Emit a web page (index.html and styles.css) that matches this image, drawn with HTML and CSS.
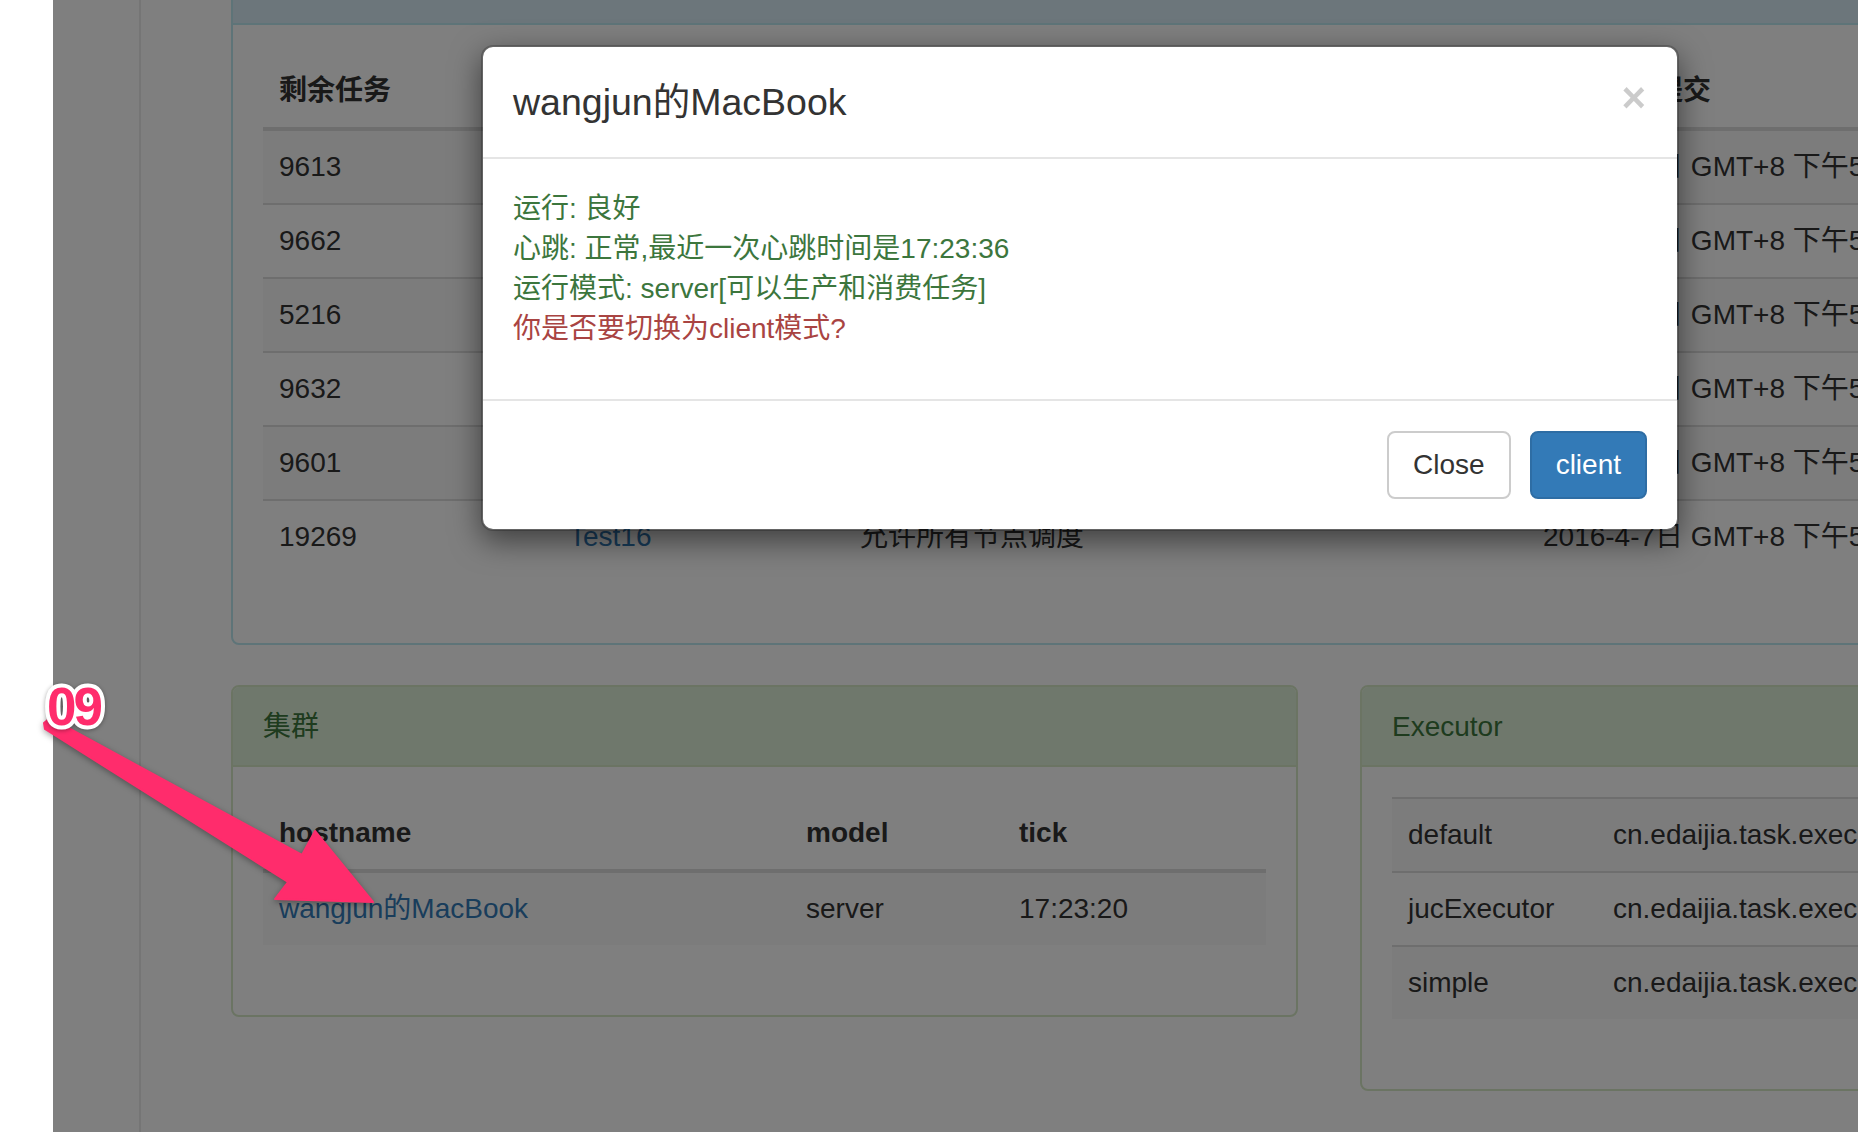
FILE: index.html
```html
<!DOCTYPE html>
<html lang="zh-CN">
<head>
<meta charset="utf-8">
<title>wangjun的MacBook</title>
<link rel="stylesheet" href="styles.css">
</head>
<body>
<div class="screen">
  <div class="margin-strip"></div>
  <div class="app">
    <aside class="sidebar"></aside>
    <main class="content">
      <section class="panel panel-info panel-tasks">
        <div class="panel-heading"></div>
        <div class="panel-body">
          <table class="table table-striped tasks-table">
            <colgroup>
              <col class="c-remain">
              <col class="c-name">
              <col class="c-policy">
              <col>
            </colgroup>
            <thead>
              <tr><th>剩余任务</th><th>任务名称</th><th>调度策略</th><th>最后一次提交</th></tr>
            </thead>
            <tbody>
              <tr><td>9613</td><td><a href="#">Test11</a></td><td>允许所有节点调度</td><td>2016-4-7日 GMT+8 下午5:23:20</td></tr>
              <tr><td>9662</td><td><a href="#">Test12</a></td><td>允许所有节点调度</td><td>2016-4-7日 GMT+8 下午5:23:20</td></tr>
              <tr><td>5216</td><td><a href="#">Test13</a></td><td>允许所有节点调度</td><td>2016-4-7日 GMT+8 下午5:23:20</td></tr>
              <tr><td>9632</td><td><a href="#">Test14</a></td><td>允许所有节点调度</td><td>2016-4-7日 GMT+8 下午5:23:20</td></tr>
              <tr><td>9601</td><td><a href="#">Test15</a></td><td>允许所有节点调度</td><td>2016-4-7日 GMT+8 下午5:23:20</td></tr>
              <tr><td>19269</td><td><a href="#">Test16</a></td><td>允许所有节点调度</td><td>2016-4-7日 GMT+8 下午5:23:20</td></tr>
            </tbody>
          </table>
        </div>
      </section>

      <div class="panel-row">
        <section class="panel panel-success panel-cluster">
          <div class="panel-heading">集群</div>
          <div class="panel-body">
            <table class="table table-striped cluster-table">
              <colgroup>
                <col class="c-host">
                <col class="c-model">
                <col>
              </colgroup>
              <thead>
                <tr><th>hostname</th><th>model</th><th>tick</th></tr>
              </thead>
              <tbody>
                <tr><td><a href="#">wangjun的MacBook</a></td><td>server</td><td>17:23:20</td></tr>
              </tbody>
            </table>
          </div>
        </section>
        <section class="panel panel-success panel-executor">
          <div class="panel-heading">Executor</div>
          <div class="panel-body">
            <table class="table table-striped executor-table">
              <colgroup>
                <col class="c-exec">
                <col>
              </colgroup>
              <tbody>
                <tr><td>default</td><td>cn.edaijia.task.executor.DefaultExecutor</td></tr>
                <tr><td>jucExecutor</td><td>cn.edaijia.task.executor.JucExecutor</td></tr>
                <tr><td>simple</td><td>cn.edaijia.task.executor.SimpleExecutor</td></tr>
              </tbody>
            </table>
          </div>
        </section>
      </div>
    </main>

    <div class="backdrop"></div>

    <div class="modal">
      <div class="modal-header">
        <h4 class="modal-title">wangjun的MacBook</h4>
        <button class="close" type="button">×</button>
      </div>
      <div class="modal-body">
        <p>
          <span class="text-success">运行: 良好</span><br>
          <span class="text-success">心跳: 正常,最近一次心跳时间是17:23:36</span><br>
          <span class="text-success">运行模式: server[可以生产和消费任务]</span><br>
          <span class="text-danger">你是否要切换为client模式?</span>
        </p>
      </div>
      <div class="modal-footer">
        <button class="btn btn-default" type="button">Close</button>
        <button class="btn btn-primary" type="button">client</button>
      </div>
    </div>
  </div>

  <svg class="annotation" width="1858" height="1132" viewBox="0 0 1858 1132">
    <polygon class="arrow" points="50,718 302,855 315,831 373,902 275,899 288,882 45,729 44,723"/>
    <text class="step" x="47" y="725">09</text>
  </svg>
</div>
</body>
</html>
```

FILE: styles.css
```css
* {
  box-sizing: border-box;
}

html, body {
  margin: 0;
  padding: 0;
  background: #fff;
}

body {
  font-family: "Liberation Sans", "Noto Sans CJK SC", sans-serif;
  font-size: 28px;
  line-height: 40px;
  color: #333;
  overflow: hidden;
}

.screen {
  position: relative;
  width: 1858px;
  height: 1132px;
  display: flex;
  overflow: hidden;
}

.margin-strip {
  flex: none;
  width: 53px;
  background: #fff;
}

.app {
  position: relative;
  flex: 1;
  display: flex;
  overflow: hidden;
  background: #fff;
}

.sidebar {
  flex: none;
  width: 88px;
  border-right: 2px solid #eaeaea;
}

.content {
  flex: none;
  width: 2500px;
  padding-left: 90px;
  margin-top: -57px;
}

/* panels */
.panel {
  background: #fff;
  border: 2px solid transparent;
  border-radius: 8px;
  margin-bottom: 40px;
}

.panel-heading {
  height: 80px;
  padding: 20px 30px;
  border-bottom: 2px solid transparent;
  border-radius: 6px 6px 0 0;
  white-space: nowrap;
}

.panel-body {
  padding: 30px;
}

.panel-info {
  border-color: #bce8f1;
}

.panel-info > .panel-heading {
  background: #d9edf7;
  border-bottom-color: #bce8f1;
  color: #31708f;
}

.panel-success {
  border-color: #d6e9c6;
}

.panel-success > .panel-heading {
  background: #dff0d8;
  border-bottom-color: #d6e9c6;
  color: #3c763d;
}

.panel-tasks {
  width: 2300px;
}

.panel-row {
  display: flex;
  align-items: flex-start;
  gap: 62px;
}

.panel-cluster {
  flex: none;
  width: 1067px;
}

.panel-executor {
  flex: none;
  width: 1067px;
}

/* tables */
.table {
  width: 100%;
  border-collapse: collapse;
  table-layout: fixed;
  margin-bottom: 40px;
}

.table th,
.table td {
  padding: 16px;
  line-height: 40px;
  text-align: left;
  vertical-align: top;
  border-top: 2px solid #ddd;
  white-space: nowrap;
  overflow: hidden;
}

.table thead th {
  border-top: 0;
  border-bottom: 4px solid #ddd;
  font-weight: bold;
  vertical-align: bottom;
}

.table-striped tbody tr:nth-child(odd) {
  background: #f9f9f9;
}

.table a {
  color: #337ab7;
  text-decoration: none;
}

.c-remain { width: 290px; }
.c-name { width: 291px; }
.c-policy { width: 683px; }

.c-host { width: 527px; }
.c-model { width: 213px; }

.c-exec { width: 205px; }

/* backdrop + modal */
.backdrop {
  position: absolute;
  inset: 0;
  background: rgba(0, 0, 0, 0.5);
}

.modal {
  position: absolute;
  left: 428px;
  top: 45px;
  width: 1198px;
  background: #fff;
  border: 2px solid rgba(0, 0, 0, 0.2);
  border-radius: 12px;
  box-shadow: 0 10px 30px rgba(0, 0, 0, 0.5);
  background-clip: padding-box;
}

.modal-header {
  display: flex;
  align-items: flex-start;
  justify-content: space-between;
  padding: 30px;
  border-bottom: 2px solid #e5e5e5;
}

.modal-title {
  margin: 0;
  font-size: 37.5px;
  line-height: 50px;
  font-weight: normal;
  color: #333;
}

.close {
  margin-top: 0;
  padding: 0;
  border: 0;
  background: transparent;
  font-family: "Liberation Sans", sans-serif;
  font-size: 42px;
  font-weight: bold;
  line-height: 42px;
  color: #000;
  opacity: 0.2;
  margin-right: 1px;
}

.modal-body {
  padding: 30px;
}

.modal-body p {
  margin: 0 0 20px;
}

.text-success {
  color: #3c763d;
}

.text-danger {
  color: #a94442;
}

.modal-footer {
  display: flex;
  justify-content: flex-end;
  gap: 19px;
  padding: 30px;
  border-top: 2px solid #e5e5e5;
}

.btn {
  font-family: "Liberation Sans", "Noto Sans CJK SC", sans-serif;
  font-size: 28px;
  line-height: 40px;
  padding: 12px 24px;
  border: 2px solid transparent;
  border-radius: 8px;
}

.btn-default {
  background: #fff;
  border-color: #ccc;
  color: #333;
}

.btn-primary {
  background: #337ab7;
  border-color: #2e6da4;
  color: #fff;
}

/* annotation */
.annotation {
  position: absolute;
  left: 0;
  top: 0;
  pointer-events: none;
  overflow: visible;
}

.arrow {
  fill: #ff2c6c;
  stroke: #ff2c6c;
  stroke-width: 2;
  stroke-linejoin: round;
  filter: drop-shadow(0 2px 3px rgba(0, 0, 0, 0.35));
}

.step {
  font-family: "Liberation Sans", sans-serif;
  font-weight: bold;
  font-size: 53px;
  letter-spacing: -3px;
  fill: #ff2c6c;
  stroke: #fff;
  stroke-width: 8px;
  stroke-linejoin: round;
  paint-order: stroke;
  filter: drop-shadow(0 1px 2px rgba(0, 0, 0, 0.35));
}
```
